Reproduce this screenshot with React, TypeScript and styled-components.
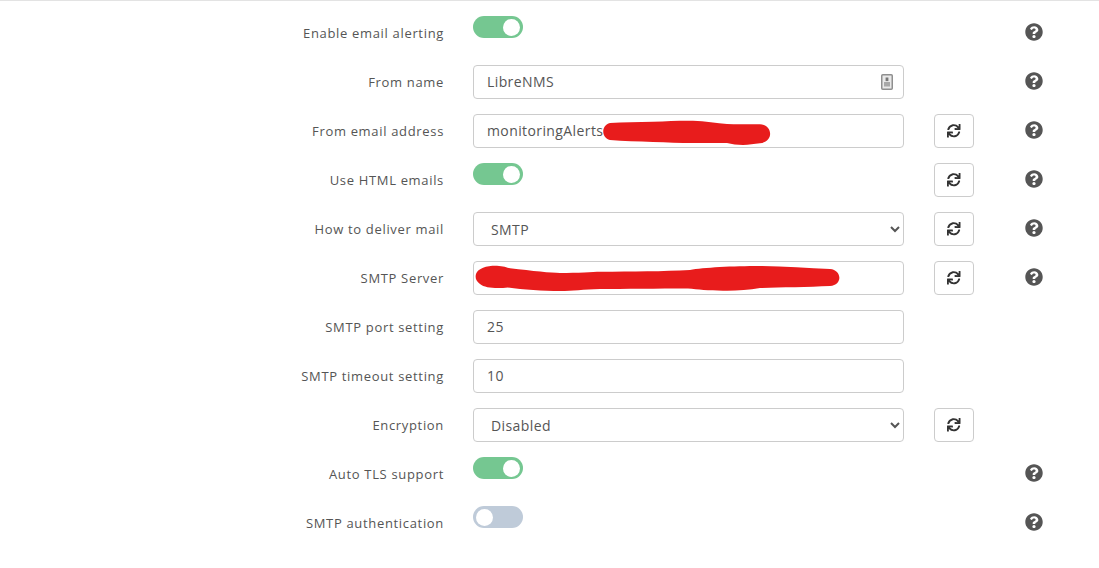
import React from "react";
import styled, { createGlobalStyle } from "styled-components";
import { FaQuestionCircle, FaSync } from "react-icons/fa";

const Global = createGlobalStyle`
  html, body { margin: 0; padding: 0; background: #fff; }
  body { font-family: "Open Sans", "Liberation Sans", sans-serif; color: #555; }
`;

const Page = styled.div`
  width: 1099px;
  height: 568px;
  overflow: hidden;
  border-top: 1px solid #e3e3e3;
  box-sizing: border-box;
  padding-top: 15px;
`;

const Row = styled.div`
  display: grid;
  grid-template-columns: 443px 431px 40px 60px;
  column-gap: 30px;
  height: 34px;
  margin-bottom: 15px;
  width: 1064px;
`;

const Label = styled.label`
  font-size: 13px;
  letter-spacing: 0.67px;
  color: #555;
  text-align: right;
  padding-top: 8px;
  margin-right: -1px;
  line-height: 18px;
`;

const Field = styled.div`
  position: relative;
  height: 34px;
`;

const TextInput = styled.input`
  width: 100%;
  height: 34px;
  box-sizing: border-box;
  border: 1px solid #ccc;
  border-radius: 4px;
  padding: 0 12px 1px 13px;
  font: 14px "Open Sans", "Liberation Sans", sans-serif;
  letter-spacing: 0.4px;
  color: #555;
  background: #fff;
  outline: none;
`;

const Select = styled.select`
  width: 100%;
  height: 34px;
  box-sizing: border-box;
  border: 1px solid #ccc;
  border-radius: 4px;
  padding: 0 12px 0 13px;
  font: 14px "Open Sans", "Liberation Sans", sans-serif;
  letter-spacing: 0.4px;
  color: #555;
  background: #fff;
  outline: none;
`;

const Track = styled.span<{ $on: boolean }>`
  display: flex;
  justify-content: ${(p) => (p.$on ? "flex-end" : "flex-start")};
  align-items: center;
  width: 50px;
  height: 22px;
  box-sizing: border-box;
  padding: 2px 3px;
  border-radius: 11px;
  background: ${(p) => (p.$on ? "#75c791" : "#bfcbd9")};
`;

const Knob = styled.span`
  width: 17px;
  height: 17px;
  border-radius: 50%;
  background: #fff;
`;

const ResetButton = styled.button`
  display: flex;
  align-items: center;
  justify-content: center;
  width: 40px;
  height: 34px;
  padding: 0;
  background: #fff;
  border: 1px solid #ccc;
  border-radius: 4px;
  color: #333;
  font-size: 13.5px;
`;

const Help = styled.span`
  display: flex;
  align-items: flex-start;
  justify-content: center;
  padding-top: 7px;
  color: #555;
  font-size: 18px;
`;

const Empty = styled.span``;

const Redaction = styled.svg`
  position: absolute;
  left: 0;
  top: 0;
  pointer-events: none;
`;

const ContactBadge = styled.svg`
  position: absolute;
  right: 11px;
  top: 9px;
`;

const Contact = () => (
  <ContactBadge width="12" height="16" viewBox="0 0 12 16">
    <rect x="0.75" y="0.75" width="10.5" height="14.5" rx="1" fill="#e9e9e9" stroke="#8f8f8f" strokeWidth="1.5" />
    <rect x="4.6" y="3.5" width="2.8" height="3.6" fill="#777" />
    <rect x="3" y="8" width="6" height="4.5" fill="#a8a8a8" />
  </ContactBadge>
);

type RowProps = {
  label: string;
  control: React.ReactNode;
  reset?: boolean;
  help?: boolean;
};

const SettingRow = ({ label, control, reset, help }: RowProps) => (
  <Row>
    <Label>{label}</Label>
    {control}
    {reset ? (
      <ResetButton aria-label="Reset">
        <FaSync />
      </ResetButton>
    ) : (
      <Empty />
    )}
    {help ? (
      <Help>
        <FaQuestionCircle />
      </Help>
    ) : (
      <Empty />
    )}
  </Row>
);

const Toggle = ({ on }: { on: boolean }) => (
  <Field>
    <Track $on={on}>
      <Knob />
    </Track>
  </Field>
);

export default function App() {
  return (
    <Page>
      <Global />
      <SettingRow label="Enable email alerting" control={<Toggle on />} help />
      <SettingRow
        label="From name"
        control={
          <Field>
            <TextInput defaultValue="LibreNMS" />
            <Contact />
          </Field>
        }
        help
      />
      <SettingRow
        label="From email address"
        control={
          <Field>
            <TextInput defaultValue="monitoringAlerts" />
            <Redaction width="431" height="34">
              <path
                d="M137 9 C150 8 165 8 180 7.7 C195 7 208 6.5 220 6.7 C232 7 244 9 254 10 C265 10.5 278 10 287 10.3 C300 11 301 28 287 29.3 C281 30 276 31 270 31 C264 31 259 30 254 29 C243 29 231 29 220 29 C207 29 194 28.5 180 28 C165 27.5 150 27 137 26 C128 24 128 11 137 9 Z"
                fill="#e81c1c"
              />
            </Redaction>
          </Field>
        }
        reset
        help
      />
      <SettingRow label="Use HTML emails" control={<Toggle on />} reset help />
      <SettingRow
        label="How to deliver mail"
        control={
          <Field>
            <Select defaultValue="SMTP">
              <option>SMTP</option>
            </Select>
          </Field>
        }
        reset
        help
      />
      <SettingRow
        label="SMTP Server"
        control={
          <Field>
            <TextInput />
            <Redaction width="431" height="34">
              <path
                d="M3 13 C5 7 14 4.5 24 4.7 C30 5 34 6.5 37 7.3 C60 10 78 12 87 12 C105 12 120 10.7 127 10.7 C160 10.5 190 10.5 217 9 C230 6.5 260 5 287 5 C310 5.5 335 7 357 8 C369 9 370 24 357 25 C335 26 305 26.5 287 27 C275 29 262 30 250 29.7 C235 29.5 225 28.5 215 27.5 C185 27.5 150 28 127 28 C110 28.5 100 30 87 30 C70 30 50 28.5 35 26.5 C25 27.5 12 27.5 7 23 C3 20 2 17 3 13 Z"
                fill="#e81c1c"
              />
            </Redaction>
          </Field>
        }
        reset
        help
      />
      <SettingRow label="SMTP port setting" control={<Field><TextInput defaultValue="25" /></Field>} />
      <SettingRow label="SMTP timeout setting" control={<Field><TextInput defaultValue="10" /></Field>} />
      <SettingRow
        label="Encryption"
        control={
          <Field>
            <Select defaultValue="Disabled">
              <option>Disabled</option>
            </Select>
          </Field>
        }
        reset
      />
      <SettingRow label="Auto TLS support" control={<Toggle on />} help />
      <SettingRow label="SMTP authentication" control={<Toggle on={false} />} help />
    </Page>
  );
}
